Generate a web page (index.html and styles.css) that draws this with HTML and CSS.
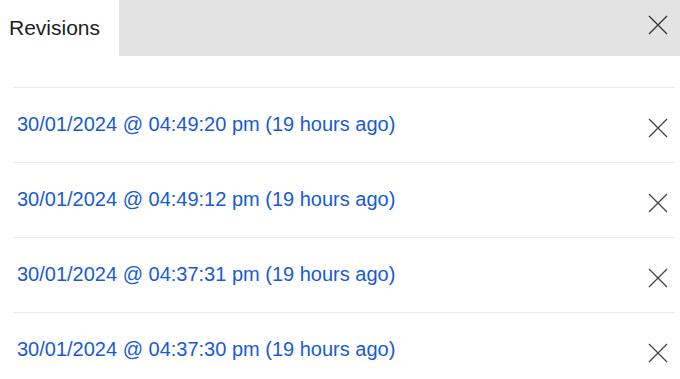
FILE: index.html
```html
<!DOCTYPE html>
<html>
<head>
<meta charset="utf-8">
<link rel="stylesheet" href="styles.css">
</head>
<body>
<div class="panel">
  <div class="header">
    <div class="tab">Revisions</div>
    <div class="bar">
      <svg class="close" width="20" height="20" viewBox="0 0 20 20"><path d="M1 1L19 19M19 1L1 19" stroke="#333" stroke-width="1.3" fill="none"/></svg>
    </div>
  </div>
  <ul class="list">
    <li class="row"><a class="rev">30/01/2024 @ 04:49:20 pm (19 hours ago)</a><svg class="del" width="20" height="20" viewBox="0 0 20 20"><path d="M1 1L19 19M19 1L1 19" stroke="#444" stroke-width="1.3" fill="none"/></svg></li>
    <li class="row"><a class="rev">30/01/2024 @ 04:49:12 pm (19 hours ago)</a><svg class="del" width="20" height="20" viewBox="0 0 20 20"><path d="M1 1L19 19M19 1L1 19" stroke="#444" stroke-width="1.3" fill="none"/></svg></li>
    <li class="row"><a class="rev">30/01/2024 @ 04:37:31 pm (19 hours ago)</a><svg class="del" width="20" height="20" viewBox="0 0 20 20"><path d="M1 1L19 19M19 1L1 19" stroke="#444" stroke-width="1.3" fill="none"/></svg></li>
    <li class="row"><a class="rev">30/01/2024 @ 04:37:30 pm (19 hours ago)</a><svg class="del" width="20" height="20" viewBox="0 0 20 20"><path d="M1 1L19 19M19 1L1 19" stroke="#444" stroke-width="1.3" fill="none"/></svg></li>
  </ul>
</div>
</body>
</html>
```
FILE: styles.css
```css
html, body {
  margin: 0;
  padding: 0;
  background: #fff;
  font-family: "Liberation Sans", Arial, sans-serif;
}
.panel {
  width: 680px;
  height: 379px;
  overflow: hidden;
}
.header {
  display: flex;
  height: 56px;
}
.tab {
  width: 110px;
  padding-left: 9px;
  font-size: 21px;
  line-height: 56px;
  color: #1e1e1e;
  background: #fff;
}
.bar {
  flex: 1;
  background: #e3e3e3;
  display: flex;
  justify-content: flex-end;
  align-items: flex-start;
  padding-right: 12px;
}
.close {
  margin-top: 15px;
}
.list {
  list-style: none;
  margin: 31px 6px 0 14px;
  padding: 0;
}
.row {
  border-top: 1px solid #ebebeb;
  height: 74px;
  box-sizing: content-box;
  display: flex;
  justify-content: space-between;
  align-items: flex-start;
  padding: 0 0 0 3px;
}
.rev {
  margin-top: 24px;
  font-size: 20px;
  line-height: 24px;
  color: #175bd6;
}
.del {
  margin-top: 30px;
  margin-right: 6px;
}
```
